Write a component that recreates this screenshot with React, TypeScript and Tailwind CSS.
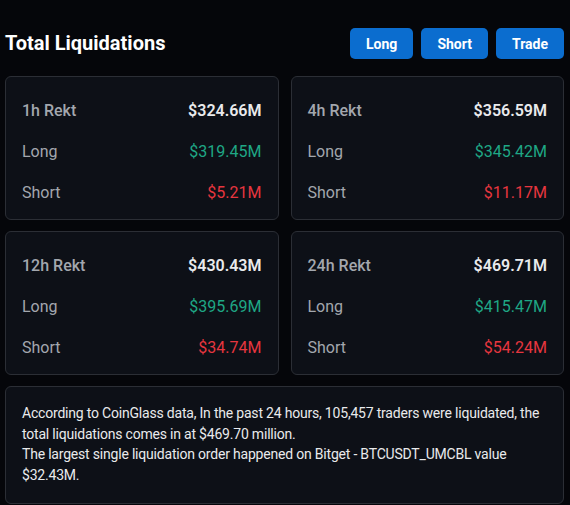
const stats = [
  { label: "1h Rekt", total: "$324.66M", long: "$319.45M", short: "$5.21M" },
  { label: "4h Rekt", total: "$356.59M", long: "$345.42M", short: "$11.17M" },
  { label: "12h Rekt", total: "$430.43M", long: "$395.69M", short: "$34.74M" },
  { label: "24h Rekt", total: "$469.71M", long: "$415.47M", short: "$54.24M" },
];

const StatCard = ({ label, total, long, short }: (typeof stats)[number]) => (
  <div className="rounded-md border border-[#2b2e35] bg-[#0d1017] px-4 pt-[22px] pb-[14px] flex flex-col gap-[17px] text-base leading-6">
    <div className="flex justify-between">
      <span className="font-medium text-[#a3a7ae]">{label}</span>
      <span className="font-semibold text-[#e9eaec]">{total}</span>
    </div>
    <div className="flex justify-between">
      <span className="text-[#a3a7ae]">Long</span>
      <span className="text-[#1fa785]">{long}</span>
    </div>
    <div className="flex justify-between">
      <span className="text-[#a3a7ae]">Short</span>
      <span className="text-[#e6363f]">{short}</span>
    </div>
  </div>
);

export default function App() {
  return (
    <div
      className="w-[570px] h-[505px] bg-[#05060a] pl-[5px] pr-[6px] pt-[28px]"
      style={{ fontFamily: "Roboto, sans-serif" }}
    >
      <div className="flex items-center justify-between h-[31px]">
        <h1 className="text-[20px] leading-[31px] font-bold text-white">Total Liquidations</h1>
        <div className="flex gap-2">
          {["Long", "Short", "Trade"].map((b) => (
            <button
              key={b}
              className="h-[31px] rounded-[5px] bg-[#0b6dcf] px-4 text-sm font-bold text-white"
            >
              {b}
            </button>
          ))}
        </div>
      </div>

      <div className="mt-[17px] grid grid-cols-2 gap-x-3 gap-y-[11px]">
        {stats.map((s) => (
          <StatCard key={s.label} {...s} />
        ))}
      </div>

      <div className="mt-[11px] rounded-md border border-[#2b2e35] bg-[#0d1017] px-4 pt-4 pb-[18px] text-sm leading-[20.5px] tracking-[-0.2px] text-[#e9eaec]">
        <p>
          According to CoinGlass data, In the past 24 hours, 105,457 traders were liquidated, the
          total liquidations comes in at $469.70 million.
        </p>
        <p>The largest single liquidation order happened on Bitget - BTCUSDT_UMCBL value $32.43M.</p>
      </div>
    </div>
  );
}
